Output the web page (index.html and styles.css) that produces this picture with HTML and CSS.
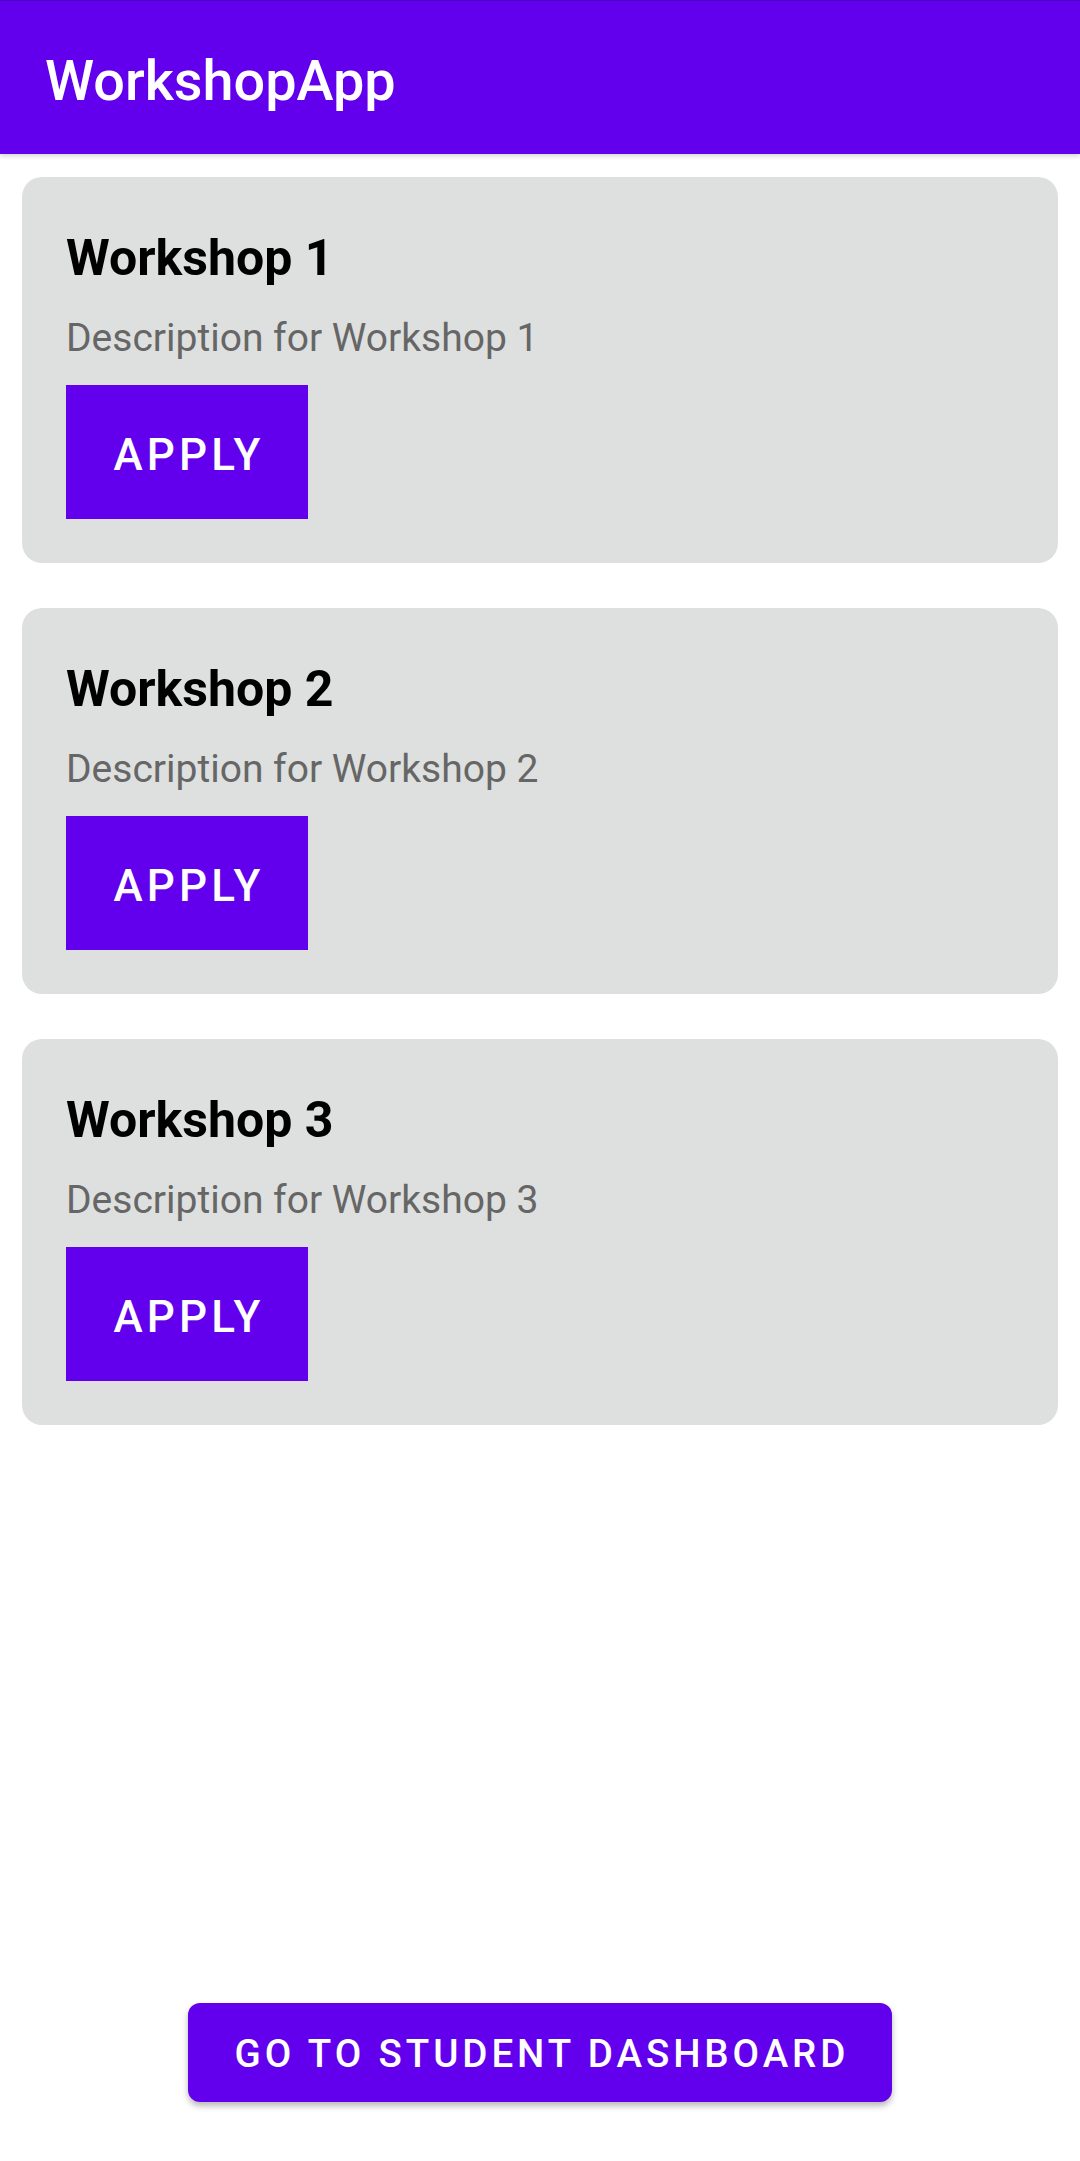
FILE: index.html
```html
<!DOCTYPE html>
<html lang="en">
<head>
<meta charset="utf-8">
<title>WorkshopApp</title>
<link rel="stylesheet" href="styles.css">
</head>
<body>
<div class="screen">
  <header class="appbar">
    <h1 class="appbar-title">WorkshopApp</h1>
  </header>
  <main class="list">
    <section class="card">
      <h2 class="card-title">Workshop 1</h2>
      <p class="card-desc">Description for Workshop 1</p>
      <button class="apply-btn">APPLY</button>
    </section>
    <section class="card">
      <h2 class="card-title">Workshop 2</h2>
      <p class="card-desc">Description for Workshop 2</p>
      <button class="apply-btn">APPLY</button>
    </section>
    <section class="card">
      <h2 class="card-title">Workshop 3</h2>
      <p class="card-desc">Description for Workshop 3</p>
      <button class="apply-btn">APPLY</button>
    </section>
  </main>
  <footer class="footer">
    <button class="dash-btn">GO TO STUDENT DASHBOARD</button>
  </footer>
</div>
</body>
</html>
```

FILE: styles.css
```css
html, body {
  margin: 0;
  padding: 0;
  background: #ffffff;
}

body {
  font-family: Roboto, "Noto Sans", "Liberation Sans", sans-serif;
}

.screen {
  display: flex;
  flex-direction: column;
  height: 2161px;
  overflow: hidden;
}

.appbar {
  height: 154px;
  box-sizing: border-box;
  background: #6200ee;
  border-top: 1px solid #4a00c4;
  display: flex;
  align-items: center;
  padding: 0 45px;
  box-shadow: 0 2px 5px rgba(0, 0, 0, 0.18);
  position: relative;
  z-index: 1;
  flex: none;
}

.appbar-title {
  margin: 0;
  color: #ffffff;
  font-size: 55.8px;
  font-weight: 500;
  line-height: 64px;
  padding-top: 6px;
}

.list {
  flex: 1;
  display: flex;
  flex-direction: column;
  gap: 45px;
  padding: 23px 22px 0;
}

.card {
  background: #dee0df;
  border-radius: 20px;
  padding: 48px 44px 44px;
  display: flex;
  flex-direction: column;
  align-items: flex-start;
}

.card-title {
  margin: 0;
  font-size: 50px;
  font-weight: 700;
  line-height: 66px;
  color: #000000;
}

.card-desc {
  margin: 22px 0 0;
  font-size: 39px;
  font-weight: 400;
  line-height: 51px;
  color: #666666;
}

.apply-btn {
  margin-top: 21px;
  width: 242px;
  height: 134px;
  border: none;
  border-radius: 0;
  background: #6200ee;
  color: #ffffff;
  font-family: Roboto, "Noto Sans", "Liberation Sans", sans-serif;
  font-size: 44px;
  font-weight: 500;
  letter-spacing: 0.093em;
  padding: 6px 0 0 0.093em;
}

.footer {
  flex: none;
  display: flex;
  justify-content: center;
  padding-bottom: 59px;
}

.dash-btn {
  width: 704px;
  height: 99px;
  border: none;
  border-radius: 12px;
  background: #6200ee;
  color: #ffffff;
  font-family: Roboto, "Noto Sans", "Liberation Sans", sans-serif;
  font-size: 38.5px;
  font-weight: 500;
  letter-spacing: 0.102em;
  padding: 2px 0 0 0.102em;
  box-shadow: 0 4px 6px rgba(0, 0, 0, 0.28);
}
```
